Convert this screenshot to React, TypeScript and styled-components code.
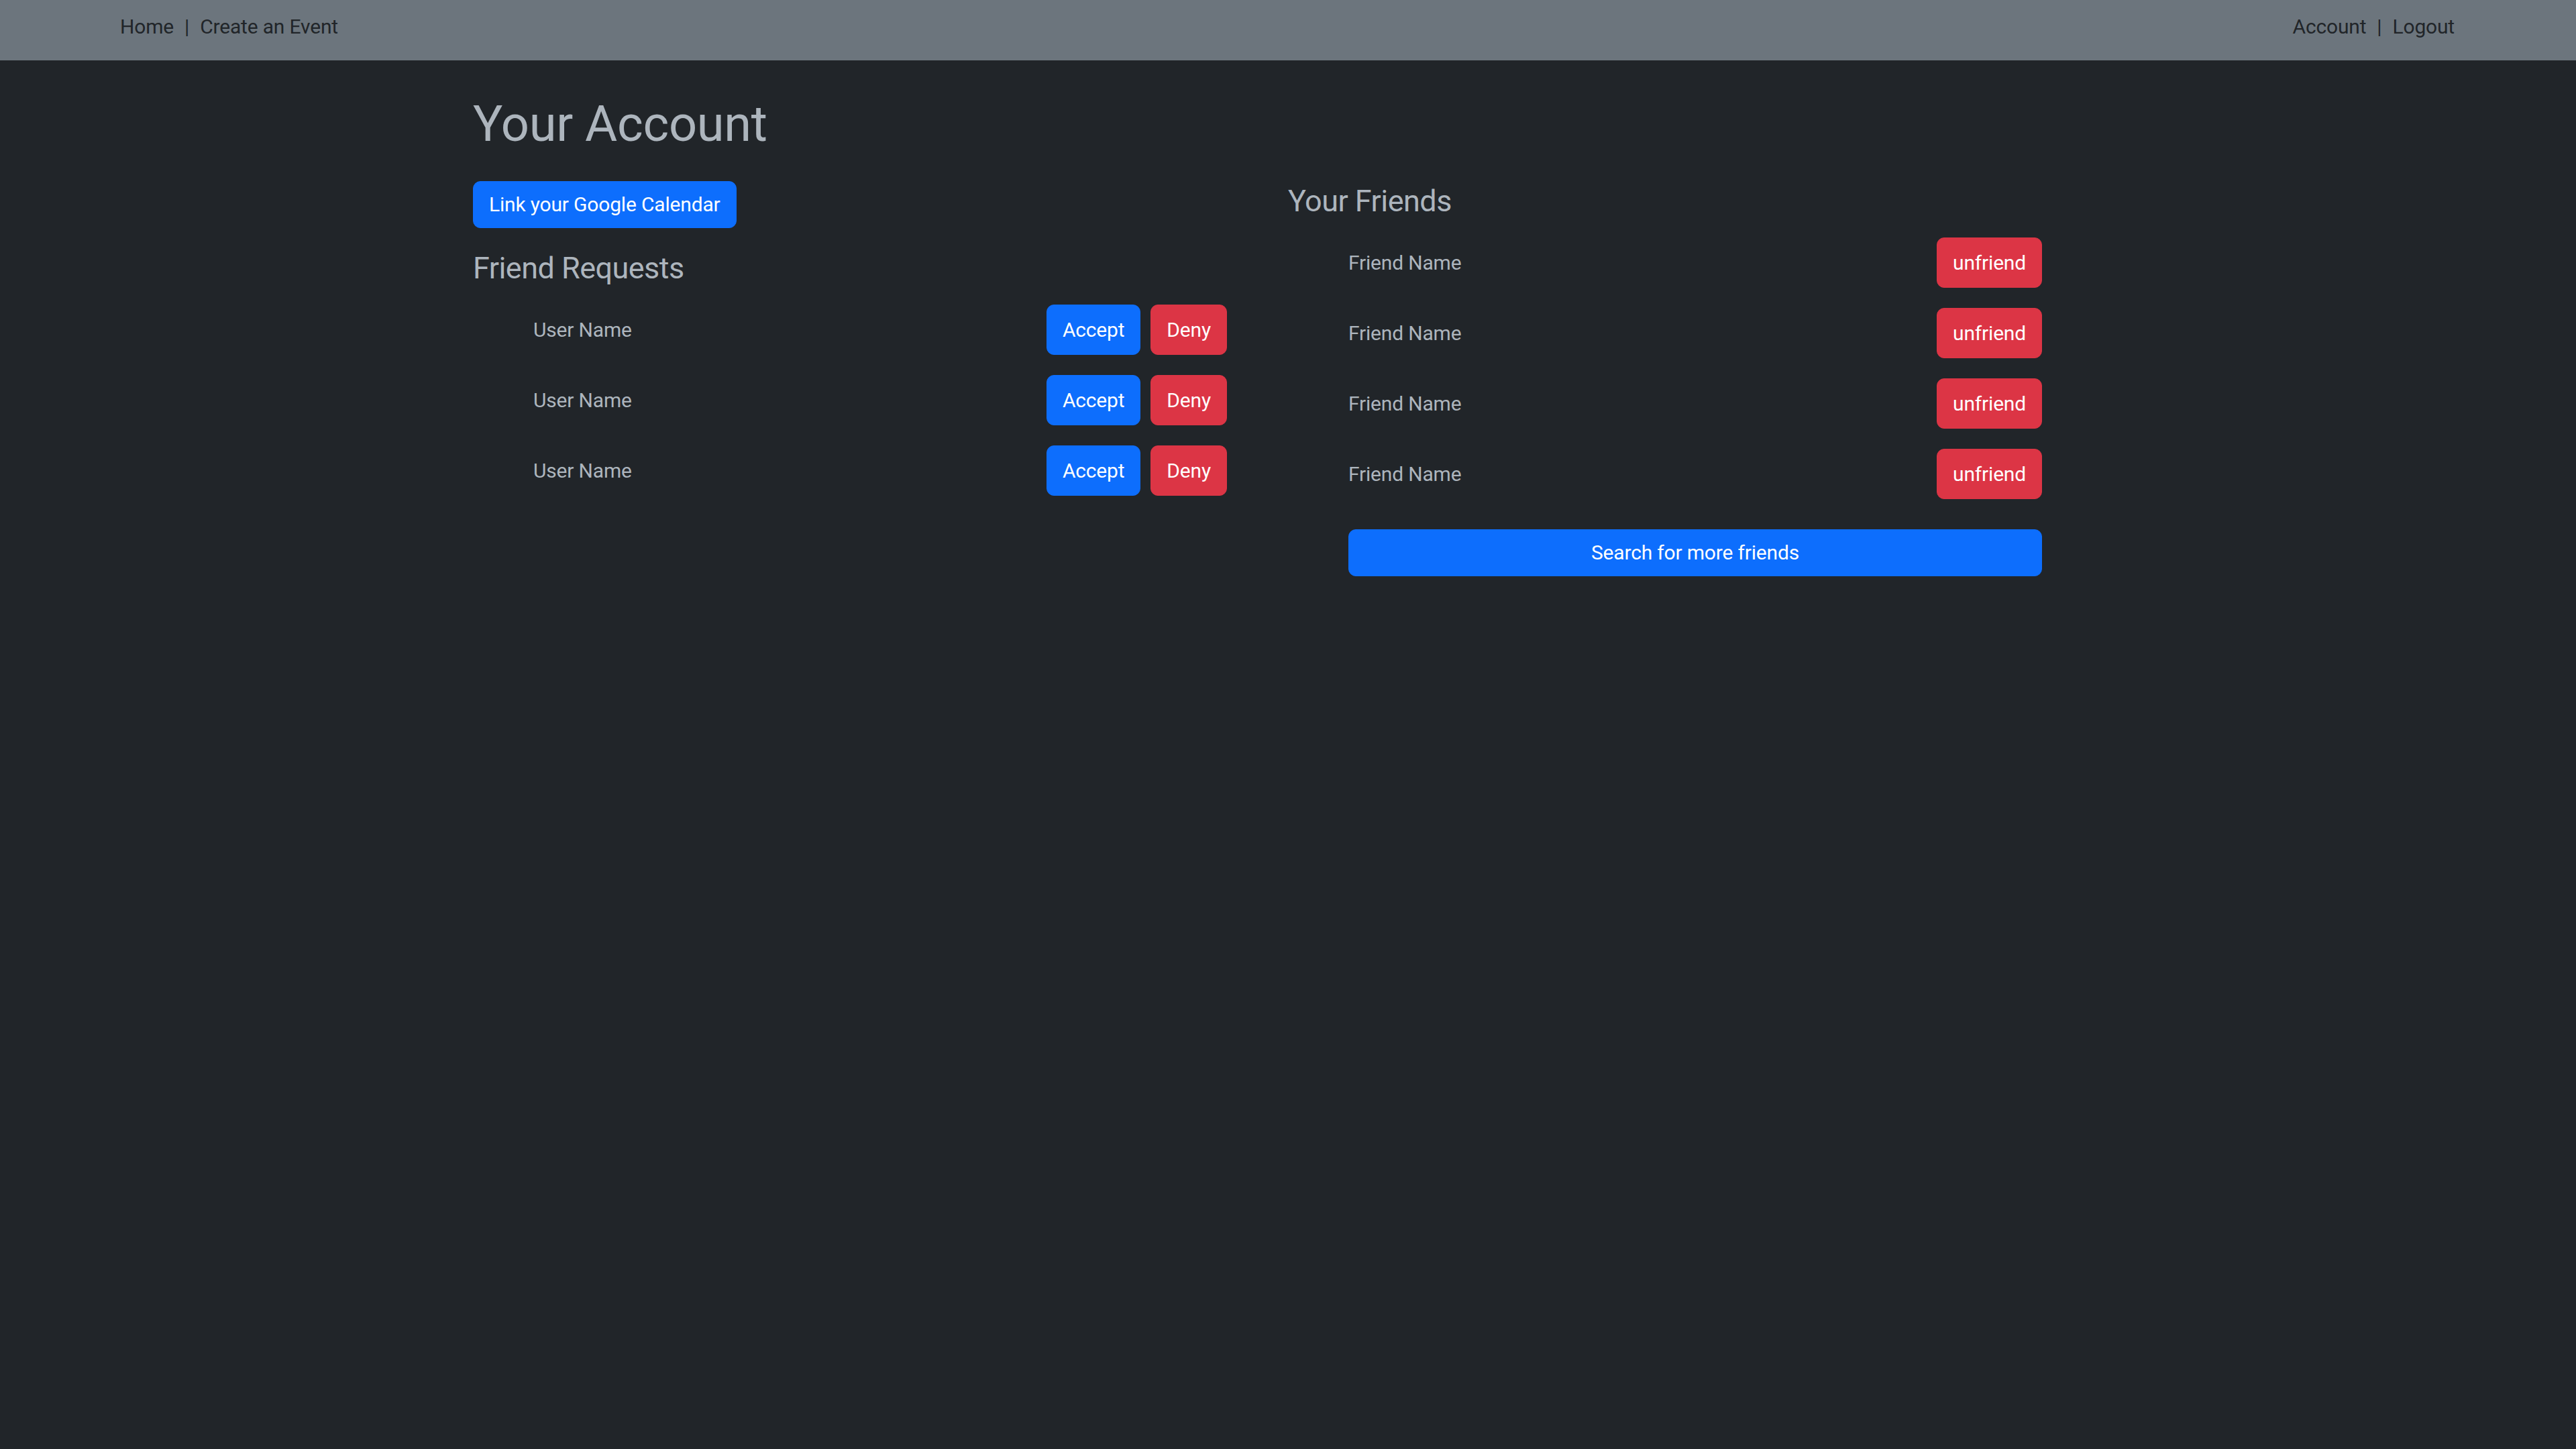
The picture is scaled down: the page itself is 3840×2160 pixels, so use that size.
import React from "react";
import styled, { createGlobalStyle } from "styled-components";

const GlobalStyle = createGlobalStyle`
  html, body {
    margin: 0;
    padding: 0;
    background: #212529;
  }
  body {
    font-family: Roboto, "Segoe UI", "Liberation Sans", sans-serif;
    font-size: 30px;
    line-height: 1.5;
    letter-spacing: -0.006em;
    color: #adb5bd;
    min-height: 2160px;
  }
  * { box-sizing: border-box; }
`;

const NavBar = styled.nav`
  height: 90px;
  background: #6c757d;
  display: flex;
  justify-content: space-between;
  align-items: flex-start;
  padding: 17px 181px 0 179px;
`;

const NavGroup = styled.div`
  display: flex;
  align-items: center;
`;

const NavLink = styled.a`
  color: #212529;
  text-decoration: none;
  font-size: 30px;
  line-height: 45px;
  cursor: pointer;
`;

const Separator = styled.span`
  color: #212529;
  margin: 0 16px;
  line-height: 45px;
`;

const Main = styled.main`
  width: 2339px;
  margin-left: 705px;
  padding-top: 51px;
`;

const Title = styled.h1`
  margin: 0 0 40px;
  font-size: 74px;
  font-weight: 400;
  line-height: 1.2;
  letter-spacing: -0.004em;
  color: #adb5bd;
`;

const Columns = styled.div`
  display: grid;
  grid-template-columns: 1124px 1124px;
  column-gap: 91px;
  align-items: start;
`;

const Column = styled.section`
  display: flex;
  flex-direction: column;
  align-items: flex-start;
`;

const SectionTitle = styled.h4<{ $top: number }>`
  margin: ${(p) => p.$top}px 0 27px;
  font-size: 45px;
  font-weight: 400;
  line-height: 54px;
  letter-spacing: -0.012em;
  color: #adb5bd;
`;

const List = styled.ul`
  list-style: none;
  margin: 0;
  padding: 0 0 0 90px;
  width: 100%;
  display: flex;
  flex-direction: column;
  gap: 30px;
`;

const Row = styled.li`
  display: flex;
  align-items: center;
  justify-content: space-between;
`;

const Name = styled.span`
  font-size: 30px;
  color: #adb5bd;
`;

const Actions = styled.div`
  display: flex;
  gap: 15px;
`;

const Button = styled.button<{ $variant: "primary" | "danger"; $tall?: boolean; $block?: boolean }>`
  font-family: inherit;
  font-size: 30px;
  line-height: 45px;
  letter-spacing: inherit;
  padding: ${(p) => (p.$tall ? "14px 23px" : "11.5px 23px")};
  border: 1px solid ${(p) => (p.$variant === "primary" ? "#0d6efd" : "#dc3545")};
  background: ${(p) => (p.$variant === "primary" ? "#0d6efd" : "#dc3545")};
  color: #ffffff;
  border-radius: 11px;
  cursor: pointer;
  width: ${(p) => (p.$block ? "100%" : "auto")};
  white-space: nowrap;
`;

const SearchWrap = styled.div`
  width: 100%;
  padding-left: 90px;
  margin-top: 45px;
`;

const requests = ["User Name", "User Name", "User Name"];
const friends = ["Friend Name", "Friend Name", "Friend Name", "Friend Name"];

export default function App() {
  return (
    <>
      <GlobalStyle />
      <NavBar>
        <NavGroup>
          <NavLink>Home</NavLink>
          <Separator>|</Separator>
          <NavLink>Create an Event</NavLink>
        </NavGroup>
        <NavGroup>
          <NavLink>Account</NavLink>
          <Separator>|</Separator>
          <NavLink>Logout</NavLink>
        </NavGroup>
      </NavBar>
      <Main>
        <Title>Your Account</Title>
        <Columns>
          <Column>
            <Button $variant="primary">Link your Google Calendar</Button>
            <SectionTitle $top={33}>Friend Requests</SectionTitle>
            <List>
              {requests.map((n, i) => (
                <Row key={i}>
                  <Name>{n}</Name>
                  <Actions>
                    <Button $variant="primary" $tall>Accept</Button>
                    <Button $variant="danger" $tall>Deny</Button>
                  </Actions>
                </Row>
              ))}
            </List>
          </Column>
          <Column>
            <SectionTitle $top={3}>Your Friends</SectionTitle>
            <List>
              {friends.map((n, i) => (
                <Row key={i}>
                  <Name>{n}</Name>
                  <Button $variant="danger" $tall>unfriend</Button>
                </Row>
              ))}
            </List>
            <SearchWrap>
              <Button $variant="primary" $block>Search for more friends</Button>
            </SearchWrap>
          </Column>
        </Columns>
      </Main>
    </>
  );
}
